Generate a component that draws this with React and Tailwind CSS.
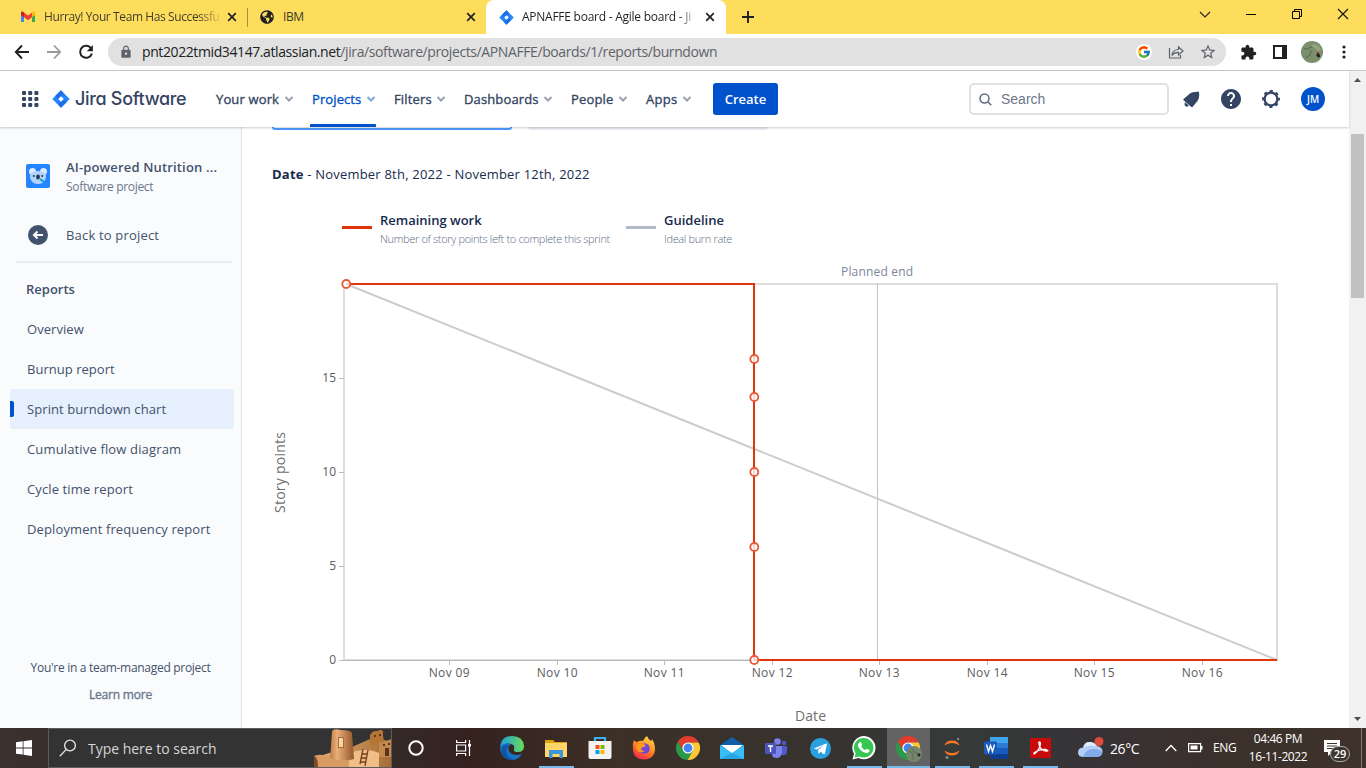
import React from "react";
import { FcGoogle } from "react-icons/fc";
import { MdExtension, MdLock, MdHelp, MdStarBorder } from "react-icons/md";
import { FaGlobeAmericas } from "react-icons/fa";

const UI = "font-['Open_Sans','Noto_Sans',sans-serif]";

function JiraMark({ size }) {
  return (
    <svg width={size} height={size} viewBox="0 0 18 18" className="shrink-0">
      <path d="M9 .3 17.7 9 9 17.7.3 9Z" fill="#2684ff" />
      <path d="M9 .3 11 2.4Q12.2 5 9 6.4L6.2 9 3.2 6Z" fill="#1c6fe8" />
      <path d="M9 17.7 6.8 15.5Q6 13 9 11.6L11.8 9l3 3Z" fill="#1c6fe8" />
      <path d="m9 6.2 2.8 2.8L9 11.8 6.2 9Z" fill="#fff" />
    </svg>
  );
}

function Cross() {
  return (
    <svg width="10" height="10" viewBox="0 0 10 10" className="shrink-0">
      <path d="m1.2 1.2 7.6 7.6M8.8 1.2 1.2 8.8" stroke="#202124" strokeWidth="1.7" />
    </svg>
  );
}

function TabStrip() {
  return (
    <div className="flex h-[34px] w-full bg-[#ffdd5c] text-[12px] text-[#3c3a2a]">
      <div className="flex w-[247px] items-center pl-[21px]">
        <svg width="14" height="12" viewBox="0 0 14 12">
          <path d="M0 2v8.5Q0 11 .8 11H3V4z" fill="#4285f4" />
          <path d="M14 2v8.500Q14 11 13.200 11H11V4z" fill="#34a853" />
          <path d="M11 1.500 12.200.6Q14 .2 14 2v2l-3 2.200z" fill="#fbbc04" />
          <path d="M3 1.500 1.800.6Q0 .2 0 2v2l3 2.200z" fill="#c5221f" />
          <path d="m3 1.400 4 3.100 4-3.100v4.800L7 9.200 3 6.200z" fill="#ea4335" />
        </svg>
        <span className="ml-[9px] w-[176px] whitespace-nowrap bg-linear-to-r from-[#3c3a2a] from-88% to-[#3c3a2a]/10 bg-clip-text tracking-[-0.4px] text-transparent">
          Hurray! Your Team Has Successfu
        </span>
        <span className="ml-[7px] flex"><Cross /></span>
      </div>
      <div className="mt-2 h-[19px] w-px bg-[#a98f38]" />
      <div className="flex w-[238px] items-center pl-[12px]">
        <FaGlobeAmericas size={14} color="#202124" />
        <span className="ml-[9px] w-[183px] tracking-[-0.4px]">IBM</span>
        <Cross />
      </div>
      <div className="flex w-[240px] items-center rounded-t-[8px] bg-white pl-[13px]">
        <JiraMark size={15} />
        <span className="ml-[8px] w-[176px] whitespace-nowrap bg-linear-to-r from-[#202124] from-88% to-[#202124]/10 bg-clip-text tracking-[-0.25px] text-transparent">
          APNAFFE board - Agile board - Ji
        </span>
        <span className="ml-[7px] flex"><Cross /></span>
      </div>
      <svg className="mt-[11px] ml-[16px]" width="12" height="12" viewBox="0 0 12 12">
        <path d="M6 0v12M0 6h12" stroke="#202124" strokeWidth="1.900" />
      </svg>
      <div className="ml-auto flex h-7 items-center">
        <svg width="46" height="12" viewBox="0 0 46 12"><path d="m18 4 5 5 5-5" fill="none" stroke="#222" strokeWidth="1.100" /></svg>
        <svg width="46" height="12" viewBox="0 0 46 12"><path d="M18 6.500h10" stroke="#000" /></svg>
        <svg width="46" height="12" viewBox="0 0 46 12"><path d="M18.500 3.500h7v7h-7zM20.500 3.500v-2h7v7h-2" fill="none" stroke="#000" /></svg>
        <svg width="46" height="12" viewBox="0 0 46 12"><path d="m18 1 10 10M28 1 18 11" stroke="#111" strokeWidth="1.100" /></svg>
      </div>
    </div>
  );
}

function Toolbar() {
  return (
    <div className="flex h-[37px] w-full items-center border-b border-[#c9c9c9] bg-white pl-[14px]">
      <svg width="16" height="16" viewBox="0 0 16 16"><path d="M15 8H2M8 1.500 1.800 8 8 14.500" fill="none" stroke="#202124" strokeWidth="1.900" /></svg>
      <svg className="ml-4" width="16" height="16" viewBox="0 0 16 16"><path d="M1 8h13M8 1.500 14.200 8 8 14.500" fill="none" stroke="#9b9b9b" strokeWidth="1.800" /></svg>
      <svg className="ml-4" width="16" height="16" viewBox="0 0 16 16"><path d="M13.300 4.700A6 6 0 1 0 13.900 9.500" fill="none" stroke="#202124" strokeWidth="2" /><path d="M14.900 1v6.200H8.800Z" fill="#202124" /></svg>
      <div className="ml-[14px] flex h-7 w-[1118px] items-center rounded-full bg-[#e1e1e1] pl-[11px]">
        <MdLock size={14} color="#5f6368" />
        <span className="ml-[9px] whitespace-nowrap text-[14px] leading-5 tracking-[-0.4px] text-[#5f6368]">
          <span className="text-[#202124]">pnt2022tmid34147.atlassian.net</span>/jira/software/projects/APNAFFE/boards/1/reports/burndown
        </span>
        <div className="ml-auto flex items-center pr-[9px]">
          <span className="flex size-4 items-center justify-center rounded-full bg-white"><FcGoogle size={14} /></span>
          <svg className="ml-4" width="16" height="16" viewBox="0 0 16 16">
            <path d="M1.500 4v10h11v-3M4 11.500C4.500 7 7 5.500 10.500 5.500V2.800L15 7l-4.500 4V8.300C7.500 8.300 5.500 9 4 11.500Z" fill="none" stroke="#5f6368" strokeWidth="1.200" />
          </svg>
          <MdStarBorder className="ml-[15px]" size={18} color="#5f6368" />
        </div>
      </div>
      <MdExtension className="ml-[14px]" size={17} color="#202124" />
      <svg className="ml-[16px]" width="14" height="14" viewBox="0 0 14 14"><path d="M1 1h12v12H1z" fill="none" stroke="#202124" strokeWidth="2" /><path d="M9 0h5v14H9z" fill="#202124" /></svg>
      <Avatar size={22} className="ml-[14px]" />
      <svg className="ml-[19px]" width="4" height="14" viewBox="0 0 4 14" fill="#202124"><circle cx="2" cy="2" r="1.600" /><circle cx="2" cy="7" r="1.600" /><circle cx="2" cy="12" r="1.600" /></svg>
    </div>
  );
}

function Avatar({ size, className }) {
  return (
    <svg width={size} height={size} viewBox="0 0 22 22" className={className}>
      <circle cx="11" cy="11" r="11" fill="#7b8f6d" />
      <path d="M3 8Q8 8 12 5M5 17Q10 14 10 9" fill="none" stroke="#5d7055" strokeWidth="1.200" />
      <path d="M12 3q6 1 8 5l-3 3q-3-5-7-6z" fill="#93a583" />
      <path d="M16 11.500 18.500 13l.5 3-2 .5-1.500-2z" fill="#1c1c1c" />
      <circle cx="17" cy="11.500" r="1" fill="#c33" />
    </svg>
  );
}

const NAV = [
  { label: "Your work", item: "w-[96px]", text: "w-[67px] tracking-[0.14px]" },
  { label: "Projects", item: "w-[82px]", text: "w-[53px] tracking-[0.1px]", active: true },
  { label: "Filters", item: "w-[70px]", text: "w-[41px] tracking-[0.15px]" },
  { label: "Dashboards", item: "w-[107px]", text: "w-[78px] tracking-[0.13px]" },
  { label: "People", item: "w-[75px]", text: "w-[46px] tracking-[0.15px]" },
  { label: "Apps", item: "w-[67px]", text: "w-[35px] tracking-[0.3px]" },
];

function JiraHeader() {
  return (
    <header className="relative z-10 flex h-[56px] w-full items-center bg-white pl-[22px] shadow-[0_1px_2px_rgba(9,30,66,0.22)]">
      <svg width="17" height="16" viewBox="0 0 17 16" fill="#344563">
        {[0, 6, 12].map((y) => [0, 6.2, 12.4].map((x) => <rect key={x + "-" + y} x={x} y={y} width="4" height="4" rx="1" />))}
      </svg>
      <div className="ml-[13px] flex w-[164px] items-center">
        <JiraMark size={18} />
        <span className="ml-[5px] whitespace-nowrap font-[Inter,sans-serif] text-[18px] leading-6 font-medium tracking-[-0.32px] text-[#344563] [font-feature-settings:'cv11','ss03']">Jira Software</span>
      </div>
      <nav className="flex h-full text-[#344563]">
        {NAV.map((n) => (
          <div key={n.label} className={"relative flex h-full items-center text-[13px] " + n.item + (n.active ? " text-[#0052cc]" : "")}>
            <span className={"whitespace-nowrap pt-[2px] [-webkit-text-stroke:0.35px_currentColor] " + n.text}>{n.label}</span>
            <svg className="ml-px" width="10" height="6" viewBox="0 0 10 6"><path d="m1.500 1 3.500 3.500L8.500 1" fill="none" stroke={n.active ? "#7ba7e6" : "#9aa2b1"} strokeWidth="2" /></svg>
            {n.active && <div className="absolute bottom-0 -left-[2px] h-[3px] w-[66px] rounded-t-[1px] bg-[#0052cc]" />}
          </div>
        ))}
      </nav>
      <div className="flex h-8 w-[65px] items-center justify-center rounded-[3px] bg-[#0052cc] pt-px text-[13px] font-semibold text-white">Create</div>
      <div className="ml-auto flex h-8 w-[200px] items-center rounded-[5px] border-2 border-[#dfe1e6] pl-[8px]">
        <svg width="13" height="13" viewBox="0 0 13 13" fill="none" stroke="#5e6c84" strokeWidth="1.500"><circle cx="5.500" cy="5.500" r="4.500" /><path d="m9 9 3.300 3.300" /></svg>
        <span className="ml-[9px] font-['Liberation_Sans',Arial,sans-serif] text-[14px] text-[#6b778c]">Search</span>
      </div>
      <div className="flex w-[180px] items-center pl-[14px]">
        <svg width="17" height="17" viewBox="0 0 17 17" fill="#344563"><path d="M.6 8 7 2.500Q9.500.5 16 .8 16.800 7 14.500 10L9.500 16Q8.500 16.600 7.800 15.500L.5 9.200Q0 8.600.6 8Z" /><path d="M2 11.200 5.800 14.500Q4.500 16.500 2.700 15.300T2 11.200Z" /></svg>
        <MdHelp className="ml-[19px]" size={24} color="#344563" />
        <svg className="ml-[18px]" width="20" height="20" viewBox="0 0 20 20">
          <circle cx="10" cy="10" r="6.400" fill="none" stroke="#344563" strokeWidth="2.300" />
          <circle cx="10" cy="10" r="7.900" fill="none" stroke="#344563" strokeWidth="2" strokeDasharray="3.200 3.005" strokeDashoffset="1.600" />
        </svg>
        <span className="ml-[20px] flex size-6 items-center justify-center rounded-full bg-[#0052cc] text-[10px] font-semibold text-white">JM</span>
      </div>
    </header>
  );
}

const LINKS = [
  ["Overview", "tracking-[0.05px]"],
  ["Burnup report", "tracking-[0.03px]"],
  ["Sprint burndown chart", "tracking-[0.08px]"],
  ["Cumulative flow diagram", "tracking-[0.15px]"],
  ["Cycle time report", "tracking-[0.12px]"],
  ["Deployment frequency report", "tracking-[0.12px]"],
];

function Sidebar() {
  return (
    <aside className="flex h-[601px] w-[242px] shrink-0 flex-col border-r border-[#dfe1e4] bg-[#fafbfc] text-[13px] text-[#42526e]">
      <div className="mt-[29px] flex h-10 items-center pl-[26px]">
        <svg width="24" height="24" viewBox="0 0 24 24">
          <rect width="24" height="24" rx="2" fill="#2684ff" />
          <circle cx="6.500" cy="7.500" r="3.500" fill="#deebff" /><circle cx="17.500" cy="7.500" r="3.500" fill="#deebff" />
          <path d="M5 9q7-4 14 0 2 4 0 7-2 4-7 4t-7-4q-2-3 0-7Z" fill="#b3d4ff" />
          <rect x="10.200" y="10.500" width="3.600" height="5" rx="1.800" fill="#253858" />
          <circle cx="7.800" cy="12" r="1" fill="#253858" /><circle cx="16.200" cy="12" r="1" fill="#253858" />
          <path d="m14 15 4 3" stroke="#00a3bf" strokeWidth="1.800" />
        </svg>
        <div className="ml-4 pt-[2px]">
          <div className="whitespace-nowrap font-semibold leading-[19px] tracking-[0.16px]">AI-powered Nutrition ...</div>
          <div className="text-[12px] leading-[19px] tracking-[-0.3px] text-[#6b778c]">Software project</div>
        </div>
      </div>
      <div className="mt-[19px] flex h-10 items-center pl-[28px]">
        <svg width="20" height="20" viewBox="0 0 20 20"><circle cx="10" cy="10" r="10" fill="#42526e" /><path d="M15 10H6.500M9.500 6.500 6 10l3.500 3.500" fill="none" stroke="#fff" strokeWidth="2" /></svg>
        <span className="ml-[18px] pt-[2px] tracking-[0.18px]">Back to project</span>
      </div>
      <div className="mt-[6px] ml-4 h-[2px] w-[216px] bg-[#ebecf0]" />
      <div className="mt-[16px] pl-[26px] font-semibold leading-5">Reports</div>
      <nav className="mt-[10px] flex flex-col pl-[10px]">
        {LINKS.map(([l, t], i) => (
          <div key={l} className={"flex h-10 w-[224px] items-center rounded-[3px] " + (i === 2 ? "bg-[#e6effc]" : "")}>
            <div className={"h-4 w-1 rounded-r-[2px] " + (i === 2 ? "bg-[#0052cc]" : "")} />
            <span className={"ml-[13px] pt-[2px] whitespace-nowrap " + t}>{l}</span>
          </div>
        ))}
      </nav>
      <div className="mt-auto flex flex-col items-center pb-[24px] text-[12px] leading-[18px]">
        <span className="whitespace-nowrap tracking-[-0.3px]">You're in a team-managed project</span>
        <span className="mt-[9px] tracking-[-0.2px] text-[#6b778c] [-webkit-text-stroke:0.35px_currentColor]">Learn more</span>
      </div>
    </aside>
  );
}

function Legend({ color, title, note, width }) {
  return (
    <div className={"flex " + width}>
      <div className={"mt-[16px] h-[3px] w-[30px] " + color} />
      <div className="ml-2 whitespace-nowrap">
        <div className="text-[13px] leading-[20px] font-semibold text-[#172b4d]">{title}</div>
        <div className="mt-px text-[11px] leading-[16px] font-light tracking-[-0.34px] text-[#5e6c84]">{note}</div>
      </div>
    </div>
  );
}

const DAYS = [["Nov 09", 449.5], ["Nov 10", 557.5], ["Nov 11", 664.5], ["Nov 12", 772.5], ["Nov 13", 879.5], ["Nov 14", 987.5], ["Nov 15", 1094.5], ["Nov 16", 1202.5]];

function Burndown() {
  return (
    <svg width="1107" height="472" viewBox="242 256 1107 472" className="block" fontSize="12">
      <path d="M344 284H1277V660H344Z" fill="none" stroke="#ddd" strokeWidth="2" />
      <path d="M339 660.500H1277" stroke="#b8b8b8" />
      {[["15", 378.5], ["10", 472.5], ["5", 566.5], ["0", 660.5]].map(([t, y]) => (
        <g key={t}>
          <path d={`M339 ${y}H344`} stroke="#bbb" />
          <text x="336" y={y + 3} textAnchor="end" fill="#5c5c5c">{t}</text>
        </g>
      ))}
      {DAYS.map(([t, x]) => (
        <g key={t}>
          <path d={`M${x} 660V665`} stroke="#bbb" />
          <text x={x - 0.3} y="677" textAnchor="middle" fill="#5c5c5c" textLength="41">{t}</text>
        </g>
      ))}
      <path d="M346 284 1277 660" stroke="#ccc" strokeWidth="2" />
      <path d="M877.500 284V660" stroke="#c1c4cb" />
      <text x="841" y="276" fill="#7a869a" textLength="72">Planned end</text>
      <path d="M346 284H754V660H1277" fill="none" stroke="#de350b" strokeWidth="2" />
      {[[346, 284], [754, 359], [754, 397], [754, 472], [754, 547], [754, 660]].map(([x, y]) => (
        <circle key={x + "-" + y} cx={x + 0.3} cy={y} r="4" fill="#fff" fillOpacity="0.8" stroke="#e75a38" strokeWidth="1.800" />
      ))}
      <text x="795" y="721" fontSize="14" fill="#707070" textLength="31">Date</text>
      <text transform="translate(285 513) rotate(-90)" fontSize="14" fill="#707070" textLength="81">Story points</text>
    </svg>
  );
}

function Scrollbar() {
  return (
    <div className="flex h-[657px] w-[17px] shrink-0 flex-col items-center bg-[#f1f1f1]">
      <svg width="17" height="17" viewBox="0 0 17 17"><path d="m5 11 3.500-4L12 11Z" fill="#505050" /></svg>
      <div className="mt-[46px] h-[164px] w-[13px] bg-[#c1c1c1]" />
      <svg className="mt-auto" width="17" height="17" viewBox="0 0 17 17"><path d="m5 6 3.500 4L12 6Z" fill="#505050" /></svg>
    </div>
  );
}

function Chrome({ badge }) {
  return (
    <svg width="24" height="24" viewBox="0 0 24 24" className="overflow-visible">
      <path d="M1.900 5.510A12 12 0 0 1 22.670 6.500H12L7.240 14.750Z" fill="#e33b2e" />
      <path d="M22.670 6.500A12 12 0 0 1 11.430 23.990L16.760 14.750 12 6.500Z" fill="#fcc934" />
      <path d="M11.430 23.990A12 12 0 0 1 1.900 5.510L7.240 14.750H16.760Z" fill="#2b9a48" />
      <circle cx="12" cy="12" r="5.600" fill="#fff" /><circle cx="12" cy="12" r="4.400" fill="#4285f4" />
      {badge && <g transform="translate(10 10)"><circle cx="8" cy="8" r="8" fill="#76866b" /><path d="M2 5q6 0 5 9M6 2q2 6 8 6" fill="none" stroke="#5f6f58" strokeWidth="1.200" /><circle cx="13" cy="9" r="1.500" fill="#222" /></g>}
    </svg>
  );
}

const APPS = [
  { k: "edge", svg: (
    <svg width="24" height="24" viewBox="0 0 24 24"><defs><linearGradient id="eg" x1="0" x2="1"><stop stopColor="#1b9de2" /><stop offset="1" stopColor="#6bdc55" /></linearGradient></defs><path d="M0 11Q1 0 12 0t12 10q0 6-6 6-5 0-4-3 1-4-3-5Q5 6 0 11Z" fill="url(#eg)" /><path d="M0 11q5-5 11-3Q7 11 9 15t8 4q3 0 5-1-4 6-10 6Q0 23 0 11Z" fill="#1673c8" /><path d="M9 9q-5 5-1 11 2 3 6 3.800Q4 25 1.500 17 0 9 9 9Z" fill="#1254a0" /></svg>) },
  { k: "files", bar: "w-[35px]", svg: (
    <svg width="22" height="19" viewBox="0 0 22 19"><path d="M0 1h8l2 2h12v5H0z" fill="#e2a20e" /><path d="M0 4h22v14H0z" fill="#ffd667" /><path d="M4 11h14v8h-3.500v-4h-7v4H4z" fill="#3b97dc" /></svg>) },
  { k: "store", svg: (
    <svg width="24" height="24" viewBox="0 0 24 24"><path d="M7 7V2h10v5" fill="none" stroke="#35b2ed" strokeWidth="2.200" /><path d="M.5 5h23v16q0 2-2 2h-19q-2 0-2-2z" fill="#f2f2f2" /><path d="M7.500 9h4v4h-4z" fill="#f25022" /><path d="M12.500 9h4v4h-4z" fill="#7fba00" /><path d="M7.500 14h4v4h-4z" fill="#00a4ef" /><path d="M12.500 14h4v4h-4z" fill="#ffb900" /></svg>) },
  { k: "firefox", svg: (
    <svg width="24" height="24" viewBox="0 0 24 24"><defs><linearGradient id="ff" x1="0.800" x2="0.300" y2="1"><stop stopColor="#ffe14a" /><stop offset=".5" stopColor="#ff8a1c" /><stop offset="1" stopColor="#f1254f" /></linearGradient></defs><path d="M2 4q1 2 3 2 3-2 6-1 2-4 4-5 1 3 4 5 1-1 1-2 3 4 3 9 0 11-11 11.500Q1 23 1 13 0 8 2 4Z" fill="url(#ff)" /><circle cx="12.500" cy="12.500" r="5.300" fill="#7446d8" /><path d="M5 9q3-3 7-1 3 2 0 3l-3 1q0 3 4 3-5 3-8-1-2-3 0-5Z" fill="#ff9a20" /></svg>) },
  { k: "chrome", svg: <Chrome /> },
  { k: "mail", svg: (
    <svg width="24" height="22" viewBox="0 0 24 22"><path d="M12 0 24 8v14H0V8z" fill="#0e5fa8" /><path d="M1 8h22L12 17z" fill="#fff" /><path d="M0 8l12 8 12-8v14H0z" fill="#37bcf5" /><path d="m0 22 12-6 12 6z" fill="#27a6e6" /></svg>) },
  { k: "teams", svg: (
    <svg width="22" height="21" viewBox="0 0 22 21"><circle cx="12.500" cy="3.500" r="3.300" fill="#7b83eb" /><circle cx="19" cy="5" r="2.200" fill="#5059c9" /><path d="M16 8h6v6q-1 4-5 3z" fill="#5059c9" /><path d="M7 8h10v7q-1 5-5.500 5T7 16z" fill="#7b83eb" /><rect y="5" width="11" height="11" rx="1" fill="#4b53bc" /><path d="M3 8h5M5.500 8v6" stroke="#fff" strokeWidth="1.400" /></svg>) },
  { k: "telegram", svg: (
    <svg width="21" height="21" viewBox="0 0 24 24"><circle cx="12" cy="12" r="12" fill="#2aa1de" /><path d="m4.500 12 14-5.600q1-.2.8 1L17 18q-.4 1-1.300.5l-3.600-2.700-1.900 2q-.6.4-.7-.6l-.3-3.400 6.500-5.400-7.800 4.800z" fill="#fff" /></svg>) },
  { k: "whatsapp", bar: "w-[35px]", svg: (
    <svg width="24" height="24" viewBox="0 0 24 24"><path d="M.5 23.500 2 17.800A11.600 11.600 0 1 1 6.500 22Z" fill="#fff" /><path d="m2.500 21.500 1.200-4A9.800 9.800 0 1 1 7 20.400Z" fill="#35c653" /><path d="M7.500 6.200q1.200-1 1.800.3l.8 2q.2.700-.9 1.700 1.400 2.800 4.200 3.900l1.200-1.400 2.900 1.400q.3.300-.3 1.700-1.600 1.800-4 1-5.500-1.800-7.200-6.800-.2-2.500 1.500-3.800Z" fill="#fff" /></svg>) },
  { k: "chrome2", hot: true, bar: "w-[43px]", svg: <Chrome badge /> },
  { k: "jupyter", bar: "w-[35px]", svg: (
    <svg width="18" height="22" viewBox="0 0 18 22"><path d="M1.500 8.500Q3 3.500 9 3.500t7.500 5Q13 6 9 6T1.500 8.500Z" fill="#f37726" /><path d="M1.500 13.500Q3 18.500 9 18.500t7.500-5Q13 16 9 16t-7.500-2.500Z" fill="#f37726" /><circle cx="15" cy="2" r="1.200" fill="#8a8a8a" /><circle cx="4" cy="20.500" r="1.500" fill="#8a8a8a" /></svg>) },
  { k: "word", bar: "w-[35px]", svg: (
    <svg width="24" height="22" viewBox="0 0 24 22"><path d="M6 0h18v6H6z" fill="#41a5ee" /><path d="M6 6h18v5H6z" fill="#2b7cd3" /><path d="M6 11h18v6H6z" fill="#185abd" /><path d="M6 17h18v5H6z" fill="#103f91" /><rect y="4.500" width="13" height="13" rx="1" fill="#185abd" /><path d="m2.500 7.500 2 7 2-6 2 6 2-7" fill="none" stroke="#fff" strokeWidth="1.400" /></svg>) },
  { k: "acrobat", bar: "w-[35px]", svg: (
    <svg width="21" height="20" viewBox="0 0 21 20"><path d="M0 0h21v20H0z" fill="#c80a0a" /><path d="M4 16q4-2 6-8 1-4-.5-4T10 9q2 4 6 4t0-1.500q-5-.5-9 1.500-4 2-3 3Z" fill="none" stroke="#fff" strokeWidth="1.300" /></svg>) },
];

function Taskbar() {
  return (
    <div className="flex h-10 w-full bg-[linear-gradient(90deg,#3a302c_0px,#342a28_392px,#35221f_470px,#3c3027_620px,#363330_830px,#353a38_960px,#363337_1090px,#3b302b_1200px,#3e322b_1366px)] text-white">
      <div className="flex w-12 items-center justify-center">
        <svg width="16" height="16" viewBox="0 0 16 16" fill="#fff"><path d="M0 2.200 6.700 1.300V7.500H0zM7.500 1.200 16 0v7.500H7.500zM0 8.400h6.700v6.200L0 13.700zM7.500 8.400H16V16l-8.500-1.200z" /></svg>
      </div>
      <div className="flex w-[344px] items-center overflow-hidden border border-[#5b5b5b] bg-[#333] pl-[10px]">
        <svg width="18" height="18" viewBox="0 0 18 18" fill="none" stroke="#e8e8e8" strokeWidth="1.300"><circle cx="11" cy="6.500" r="5.400" /><path d="M7.300 10.400.8 17.200" /></svg>
        <span className="ml-[11px] text-[14px] tracking-[-0.02px] whitespace-nowrap text-[#d6d6d6]">Type here to search</span>
        <svg className="ml-auto shrink-0" width="77" height="38" viewBox="0 0 77 38">
          <defs>
            <linearGradient id="t1"><stop stopColor="#bd7c45" /><stop offset=".3" stopColor="#eab077" /><stop offset="1" stopColor="#92552a" /></linearGradient>
            <linearGradient id="t2"><stop stopColor="#e6b27a" /><stop offset="1" stopColor="#a56c35" /></linearGradient>
          </defs>
          <path d="M0 38 3 28 15 24 38 18 56 10 58 3 68 1 70 12 77 11v27Z" fill="url(#t2)" />
          <path d="m56 5 3 1 1-4 4 1 1-2 4 1v12l-13 3z" fill="#b37434" />
          <path d="m65 13 3 1 2-3 3 1 4-2v18H65z" fill="#c18a4c" />
          <path d="M35 24q18-6 30 0v14H34z" fill="#efbd85" />
          <path d="M18 3q0-4 9-2 10 0 11 3l2 26q-12 4-24 0Z" fill="url(#t1)" />
          <path d="M24 8h6v11h-6z" fill="#a9683a" /><path d="M25 9h4v9h-4z" fill="#f5d7a5" />
          <path d="M71 19h4v8h-4zM60 6h2v2h-2zM65 5h2v2h-2zM69 15h2v2h-2zM74 14h2v2h-2z" fill="#60341b" />
          <path d="m46 35 3-15M51 37l3-16M48 25h5M47 29h5M46 33h6" stroke="#743d1c" strokeWidth="1.300" />
          <path d="M0 27q7-3 15 1t20 3v7H0Z" fill="#d79a62" /><path d="M0 27q4 1 4 11H0z" fill="#7d4a25" />
        </svg>
      </div>
      <div className="flex w-12 items-center justify-center"><svg width="18" height="18" viewBox="0 0 18 18"><circle cx="9" cy="9" r="6.700" fill="none" stroke="#fff" strokeWidth="2" /></svg></div>
      <div className="flex w-[50px] items-center pl-[16px]">
        <svg width="16" height="16" viewBox="0 0 16 16" fill="none" stroke="#fff" strokeWidth="1.200"><path d="M.6 0v2.500h9V0M.6 5h9v6h-9zM.6 16v-2.500h9V16M13.500 0v16" /><path d="M12 4h3v2.500h-3z" fill="#fff" stroke="none" /></svg>
      </div>
      {APPS.map((a) => (
        <div key={a.k} className="flex w-11 shrink-0 flex-col items-center">
          <div className={"flex h-[38px] w-[43px] items-center justify-center pt-[2px] " + (a.hot ? "bg-[#626262]" : "")}>{a.svg}</div>
          {a.bar && <div className={"h-[2px] bg-[#76b9ed] " + a.bar} />}
        </div>
      ))}
      <div className="flex flex-1 items-center pl-[16px] text-[12px]">
        <svg width="26" height="22" viewBox="0 0 26 22"><circle cx="21" cy="4.500" r="4.500" fill="#de4a37" /><path d="M6 20Q0 20 0 15.500t5-5Q6 5 11.500 5T19 9q5.500 1 5.500 5.500T19 20z" fill="#b4cff5" /><path d="M5 20q3-8 10-8 9 0 9 4-1 4-5 4z" fill="#83aae8" /><path d="M6 10Q7 5 11.500 5T18 9q-7-1-12 1Z" fill="#e2ecfc" /></svg>
        <span className="ml-[6px] w-[55px] text-[14px] tracking-[-0.4px]">26°C</span>
        <svg width="12" height="8" viewBox="0 0 12 8"><path d="m.7 7 5.300-5.500L11.300 7" fill="none" stroke="#fff" strokeWidth="1.300" /></svg>
        <svg className="ml-[11px]" width="15" height="10" viewBox="0 0 15 10"><path d="M.6.6h12v8H.6z" fill="none" stroke="#fff" strokeWidth="1.200" /><path d="M2.500 2.500h7v4h-7zM13 3h1.500v3.500H13z" fill="#fff" /></svg>
        <span className="ml-[10px] w-[24px] tracking-[-0.3px]">ENG</span>
        <div className="ml-[11px] flex w-[60px] flex-col items-center text-[12px] leading-[18px] tracking-[-0.42px] whitespace-nowrap"><span>04:46 PM</span><span>16-11-2022</span></div>
        <div className="relative ml-[16px] flex">
          <svg width="16" height="16" viewBox="0 0 16 16"><path d="M0 0h16v12H8l-4 4v-4H0z" fill="#fff" /><path d="M3 3.500h10M3 6h10M3 8.500h10" stroke="#3d332d" /></svg>
          <span className="absolute top-[6px] left-[6px] flex h-4 w-5 items-center justify-center rounded-full border border-[#aaa] bg-[#3d3733] text-[11px] font-semibold">29</span>
        </div>
        <div className="ml-auto mr-1 h-10 w-px bg-[#807873]" />
      </div>
    </div>
  );
}

export default function App() {
  return (
    <div className={"flex h-[768px] w-[1366px] flex-col overflow-hidden bg-white " + UI}>
      <TabStrip />
      <Toolbar />
      <div className="flex h-[657px]">
        <div className="flex w-[1349px] flex-col">
          <JiraHeader />
          <div className="flex">
            <Sidebar />
            <main className="flex h-[601px] w-[1107px] flex-col">
              <div className="flex h-[3px] gap-4 pl-[30px]">
                <div className="h-[3px] w-[240px] rounded-b-[3px] border-x-2 border-b-2 border-[#4c9aff]" />
                <div className="h-[3px] w-[240px] rounded-b-[3px] bg-[#ebecf0]" />
              </div>
              <div className="mt-[34px] pl-[30px] text-[13px] leading-5 tracking-[0.21px] text-[#172b4d]"><b>Date</b> - November 8th, 2022 - November 12th, 2022</div>
              <div className="mt-[26px] flex h-[46px] pl-[100px]">
                <Legend color="bg-[#de350b]" width="w-[284px]" title="Remaining work" note="Number of story points left to complete this sprint" />
                <Legend color="bg-[#b3b9c6]" width="w-[140px]" title="Guideline" note="Ideal burn rate" />
              </div>
              <Burndown />
            </main>
          </div>
        </div>
        <Scrollbar />
      </div>
      <Taskbar />
    </div>
  );
}
